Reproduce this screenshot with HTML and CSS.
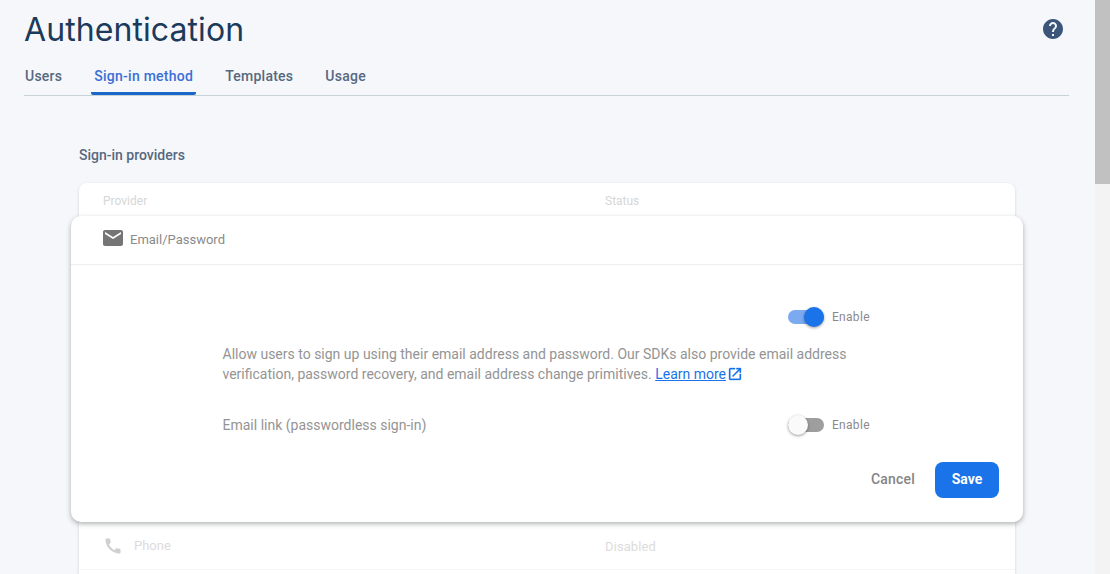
FILE: index.html
```html
<!DOCTYPE html>
<html lang="en">
<head>
    <meta charset="UTF-8">
    <title>Authentication</title>
    <link rel="stylesheet" href="styles.css">
</head>
<body>
    <div class="page">
        <main class="main">
            <header class="header">
                <div class="title-row">
                    <h1>Authentication</h1>
                    <svg class="help" viewBox="0 0 24 24" width="24" height="24"><path fill="#3b5679" d="M12 2C6.48 2 2 6.48 2 12s4.48 10 10 10 10-4.48 10-10S17.52 2 12 2zm1 17h-2v-2h2v2zm2.07-7.75l-.9.92C13.45 12.9 13 13.5 13 15h-2v-.5c0-1.1.45-2.1 1.17-2.83l1.24-1.26c.37-.36.59-.86.59-1.41 0-1.1-.9-2-2-2s-2 .9-2 2H8c0-2.21 1.79-4 4-4s4 1.79 4 4c0 .88-.36 1.68-.93 2.25z"/></svg>
                </div>
                <nav class="tabs">
                    <a class="tab">Users</a>
                    <a class="tab active">Sign-in method</a>
                    <a class="tab">Templates</a>
                    <a class="tab">Usage</a>
                </nav>
            </header>

            <section class="content">
                <h2>Sign-in providers</h2>
                <div class="table">
                    <div class="table-row table-head">
                        <span class="col-provider">Provider</span>
                        <span>Status</span>
                    </div>
                    <div class="table-spacer"></div>
                    <div class="table-row phone-row">
                        <span class="col-provider provider-cell">
                            <svg viewBox="0 0 24 24" width="20" height="20"><path fill="#cfcfcf" d="M20.01 15.38c-1.23 0-2.42-.2-3.53-.56-.35-.12-.74-.03-1.01.24l-1.57 1.97c-2.83-1.35-5.48-3.9-6.89-6.83l1.95-1.66c.27-.28.35-.67.24-1.02-.37-1.11-.56-2.3-.56-3.53 0-.54-.45-.99-.99-.99H4.19C3.65 3 3 3.24 3 3.99 3 13.28 10.73 21 20.01 21c.71 0 .99-.63.99-1.18v-3.45c0-.54-.45-.99-.99-.99z"/></svg>
                            Phone
                        </span>
                        <span class="cell-status">Disabled</span>
                    </div>
                    <div class="table-row table-rest"></div>
                </div>
            </section>

            <!-- expanded provider card sits over the table -->
            <div class="provider-card">
                <div class="card-head">
                    <svg viewBox="0 0 24 24" width="24" height="24"><path fill="#757575" d="M20 4H4c-1.1 0-2 .9-2 2v12c0 1.1.9 2 2 2h16c1.1 0 2-.9 2-2V6c0-1.1-.9-2-2-2zm0 4l-8 5-8-5V6l8 5 8-5v2z"/></svg>
                    <span>Email/Password</span>
                </div>
                <div class="card-body">
                    <div class="toggle-row first">
                        <span class="toggle on"><i></i></span>
                        <span class="toggle-label">Enable</span>
                    </div>
                    <p class="desc">Allow users to sign up using their email address and password. Our SDKs also provide email address verification, password recovery, and email address change primitives. <a class="learn">Learn more</a><svg class="ext" viewBox="0 0 24 24" width="16" height="16"><path fill="#1a73e8" stroke="#1a73e8" stroke-width="0.5" d="M19 19H5V5h7V3H5c-1.11 0-2 .9-2 2v14c0 1.1.89 2 2 2h14c1.1 0 2-.9 2-2v-7h-2v7zM14 3v2h3.59l-9.83 9.83 1.41 1.41L19 6.41V10h2V3h-7z"/></svg></p>
                    <div class="toggle-row link-row">
                        <span class="link-label">Email link (passwordless sign-in)</span>
                        <span class="toggle"><i></i></span>
                        <span class="toggle-label">Enable</span>
                    </div>
                </div>
                <div class="card-actions">
                    <button class="btn-cancel">Cancel</button>
                    <button class="btn-save">Save</button>
                </div>
            </div>
        </main>
        <div class="scrollbar"><div class="thumb"></div></div>
    </div>
</body>
</html>
```

FILE: styles.css
```css
* {
    box-sizing: border-box;
}
html, body {
    margin: 0;
    height: 100%;
    overflow: hidden;
}
body {
    font-family: Roboto, Arial, sans-serif;
    background-color: #f5f7fa;
}
.page {
    display: flex;
    height: 574px;
}
.main {
    position: relative;
    flex: 1;
    overflow: hidden;
}
.header {
    margin: 0 26px 0 24px;
    border-bottom: 1px solid #c5d3d8;
}
.title-row {
    display: flex;
    justify-content: space-between;
    align-items: center;
    height: 57px;
    padding-right: 4px;
}
h1 {
    margin: 2px 0 0;
    font-family: Inter, Roboto, sans-serif;
    font-size: 32px;
    font-weight: 400;
    letter-spacing: 0.08px;
    color: #1c3a5a;
}
.help {
    display: block;
}
.tabs {
    display: flex;
    height: 38px;
}
.tab {
    display: flex;
    align-items: center;
    height: 38px;
    padding: 2px 4px 0 3px;
    margin-right: 25px;
    font-size: 14px;
    font-weight: 500;
    letter-spacing: 0.25px;
    color: #566880;
    border-bottom: 3px solid transparent;
}
.tab:first-child {
    padding-left: 1px;
}
.tab.active {
    margin-right: 26px;
    padding-left: 3px;
    padding-right: 3px;
    color: #3b6fd6;
    border-bottom-color: #1a66c9;
    border-radius: 0 0 2px 2px;
}
.content {
    padding: 50px 79px 0 79px;
}
h2 {
    margin: 0 0 19px;
    font-size: 14px;
    line-height: 18px;
    font-weight: 500;
    color: #566880;
}
.table {
    width: 936px;
    background: white;
    border-radius: 8px 8px 0 0;
    box-shadow: 0 1px 3px rgba(60,64,67,0.2);
}
.table-row {
    display: flex;
    align-items: center;
    font-size: 12px;
    color: #d6d6d6;
}
.table-head {
    height: 33px;
    padding-top: 2px;
}
.table-spacer {
    height: 306px;
}
.phone-row {
    border-bottom: 1px solid #f6f6f6;
}
.table-rest {
    height: 60px;
}
.col-provider {
    width: 526px;
    padding-left: 24px;
}
.provider-cell {
    display: flex;
    align-items: center;
    gap: 11px;
    height: 47px;
    font-size: 13px;
    color: #dcdcdc;
}
.cell-status {
    margin-top: 2px;
    font-size: 13px;
    letter-spacing: 0.1px;
    color: #dcdcdc;
}
.provider-card {
    position: absolute;
    left: 71px;
    top: 216px;
    width: 952px;
    height: 306px;
    background: white;
    border-radius: 10px;
    box-shadow: 0 2px 5px rgba(60,64,67,0.4);
}
.card-head {
    display: flex;
    align-items: center;
    gap: 5px;
    height: 49px;
    padding: 0 0 2px 30px;
    border-bottom: 1px solid #eeeeee;
    font-size: 13px;
    color: #8a8a8a;
}
.card-head svg {
    margin-top: -2px;
}
.card-body {
    padding: 0 0 0 152px;
}
.toggle-row {
    display: flex;
    align-items: center;
    height: 22px;
}
.toggle-row.first {
    margin-top: 41px;
    padding-left: 565px;
}
.toggle {
    position: relative;
    display: block;
    width: 36px;
    height: 14px;
    margin-right: 8px;
    border-radius: 7px;
    background-color: #9e9e9e;
}
.toggle i {
    position: absolute;
    left: 0;
    top: -3px;
    width: 20px;
    height: 20px;
    border-radius: 50%;
    background: #fafafa;
    box-shadow: 0 1px 3px rgba(0,0,0,0.4);
}
.toggle.on {
    background-color: #7baaf0;
}
.toggle.on i {
    left: 16px;
    background: #1a73e8;
}
.toggle-label {
    font-size: 12px;
    letter-spacing: 0.3px;
    color: #8a8a8a;
}
.desc {
    width: 650px;
    margin: 16px 0 0 -0.5px;
    font-size: 14px;
    line-height: 20px;
    color: #949494;
}
.learn {
    color: #1a73e8;
    text-decoration: underline;
}
.ext {
    vertical-align: -3px;
    margin-left: 1px;
}
.link-row {
    margin-top: 30px;
}
.link-label {
    width: 565.5px;
    margin-left: -0.5px;
    font-size: 14px;
    color: #949494;
}
.card-actions {
    position: absolute;
    right: 24px;
    bottom: 24px;
    display: flex;
    align-items: center;
    gap: 20px;
}
button {
    border: none;
    font-family: Roboto, Arial, sans-serif;
    font-size: 14px;
    font-weight: 500;
    padding: 0 0 2px;
    cursor: pointer;
}
.btn-cancel {
    background: none;
    letter-spacing: 0.2px;
    color: #858585;
}
.btn-save {
    width: 64px;
    height: 36px;
    border-radius: 8px;
    background-color: #1a73e8;
    color: white;
    font-weight: 700;
}
.scrollbar {
    width: 15px;
    background-color: #f3f3f3;
}
.thumb {
    height: 184px;
    background-color: #c1c1c1;
}
```
